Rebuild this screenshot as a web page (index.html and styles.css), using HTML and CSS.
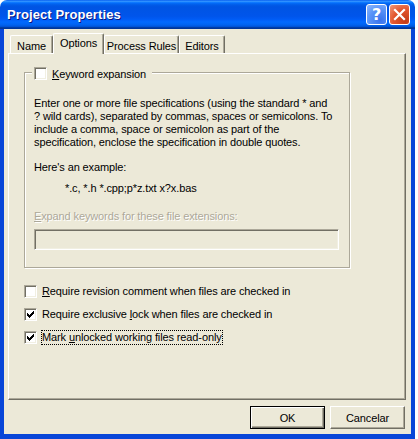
FILE: index.html
```html
<!DOCTYPE html>
<html>
<head>
<meta charset="utf-8">
<link rel="stylesheet" href="styles.css">
</head>
<body>
<div class="window">
  <div class="titlebar">
    <span class="title">Project Properties</span>
    <div class="controls">
      <span class="tbtn help">?</span>
      <span class="tbtn close"><svg width="13" height="13" viewBox="0 0 13 13"><path d="M2 2 L11 11 M11 2 L2 11" stroke="#fff" stroke-width="2.2" stroke-linecap="square"/></svg></span>
    </div>
  </div>
  <div class="frame">
    <div class="tabs">
      <div class="tab t-name">Name</div>
      <div class="tab active t-options">Options</div>
      <div class="tab t-rules">Process Rules</div>
      <div class="tab t-editors">Editors</div>
    </div>
    <div class="panel">
      <div class="group">
        <div class="caption"><span class="cb"></span><span class="cap-text"><u>K</u>eyword expansion</span></div>
        <p class="desc">Enter one or more file specifications (using the standard * and<br>? wild cards), separated by commas, spaces or semicolons. To<br>include a comma, space or semicolon as part of the<br>specification, enclose the specification in double quotes.</p>
        <p class="here">Here's an example:</p>
        <p class="example">*.c, *.h *.cpp;p*z.txt x?x.bas</p>
        <p class="disabled"><u>E</u>xpand keywords for these file extensions:</p>
        <div class="textbox"></div>
      </div>
      <div class="options">
        <div class="opt"><span class="cb"></span><span class="lbl"><u>R</u>equire revision comment when files are checked in</span></div>
        <div class="opt"><span class="cb checked"><svg width="7" height="7" viewBox="0 0 7 7"><path d="M0 2h1v1h1v1h1v-1h1v-1h1v-1h1v-1h1v3h-1v1h-1v1h-1v1h-1v1h-1v-1h-1v-1h-1z" fill="#000"/></svg></span><span class="lbl">Require exclusive <u>l</u>ock when files are checked in</span></div>
        <div class="opt"><span class="cb checked"><svg width="7" height="7" viewBox="0 0 7 7"><path d="M0 2h1v1h1v1h1v-1h1v-1h1v-1h1v-1h1v3h-1v1h-1v1h-1v1h-1v1h-1v-1h-1v-1h-1z" fill="#000"/></svg></span><span class="lbl focus">Mark <u>u</u>nlocked working files read-only</span></div>
      </div>
    </div>
    <div class="buttons">
      <button class="btn default">OK</button>
      <button class="btn">Cancelar</button>
    </div>
  </div>
</div>
</body>
</html>
```
FILE: styles.css
```css
html, body {
  margin: 0;
  padding: 0;
  background: #ffffff;
}
body {
  font-family: "Liberation Sans", Arial, sans-serif;
  font-size: 11px;
  letter-spacing: -0.12px;
  color: #000;
}
.window {
  width: 415px;
  height: 439px;
  display: flex;
  flex-direction: column;
}
.titlebar {
  height: 29px;
  flex: none;
  box-sizing: border-box;
  border-radius: 7px 7px 0 0;
  background: linear-gradient(to bottom, #0058ee 0%, #3593ff 4%, #288eff 6%, #127dff 8%, #036ffc 10%, #0262ee 14%, #0057e5 20%, #0054e3 24%, #0055eb 56%, #005bf5 66%, #026afe 76%, #0062ef 86%, #0052d6 92%, #0040ab 94%, #003092 100%);
  display: flex;
  align-items: center;
  justify-content: space-between;
  padding: 0 5px 1px 7px;
}
.title {
  color: #fff;
  font-weight: bold;
  font-size: 13px;
  letter-spacing: 0.1px;
  text-shadow: 1px 1px 0 #0a1883;
}
.controls {
  display: flex;
  gap: 2px;
}
.tbtn {
  width: 21px;
  height: 21px;
  box-sizing: border-box;
  border: 1px solid #fff;
  border-radius: 3px;
  display: flex;
  align-items: center;
  justify-content: center;
  color: #fff;
  font-weight: bold;
  font-size: 16px;
  font-family: "DejaVu Sans", sans-serif;
}
.help {
  background: radial-gradient(circle at 70% 80%, #3a72ec 0%, #5a94f8 55%, #90b8fc 100%);
}
.close {
  background: radial-gradient(circle at 80% 85%, #c33b16 0%, #e3572f 55%, #f19a7c 100%);
}
.frame {
  flex: 1;
  box-sizing: border-box;
  background: #ece9d8;
  border-left: 4px solid #0846d8;
  border-right: 4px solid #0846d8;
  border-bottom: 5px solid #0846d8;
  display: flex;
  flex-direction: column;
  padding: 4px 0 0 0;
}
.tabs {
  display: flex;
  align-items: flex-end;
  height: 21px;
  margin: 0 0 -1px 4px;
  padding-left: 2px;
  position: relative;
  z-index: 1;
}
.tab {
  box-sizing: border-box;
  height: 18px;
  margin-bottom: 1px;
  border-left: 1px solid #fff;
  border-top: 1px solid #fff;
  border-right: 1px solid #716f64;
  box-shadow: inset -1px 0 0 #aca899;
  border-radius: 2px 2px 0 0;
  background: #ece9d8;
  display: flex;
  align-items: center;
  justify-content: center;
  padding-top: 2px;
}
.t-name { width: 43px; }
.t-options { width: 51px; }
.t-rules { width: 75px; }
.t-editors { width: 46px; }
.tab.active {
  height: 21px;
  margin-bottom: 0;
  padding-top: 0;
  padding-bottom: 3px;
}
.panel {
  box-sizing: border-box;
  height: 347px;
  margin: 0 5px 0 4px;
  border-left: 1px solid #fff;
  border-top: 1px solid #fff;
  border-right: 1px solid #716f64;
  border-bottom: 1px solid #716f64;
  box-shadow: inset -1px -1px 0 #aca899;
  display: flex;
  flex-direction: column;
}
.group {
  box-sizing: border-box;
  width: 326px;
  height: 196px;
  margin: 18px 0 0 15px;
  border: 1px solid #aca899;
  box-shadow: 1px 1px 0 #fff, inset 1px 1px 0 #fff;
  display: flex;
  flex-direction: column;
  align-items: flex-start;
  padding: 0 0 0 9px;
}
.caption {
  margin: -6px 0 0 -2px;
  padding: 0 6px 0 2px;
  background: #ece9d8;
  display: flex;
  align-items: center;
  gap: 5px;
  height: 13px;
}
.cb {
  width: 13px;
  height: 13px;
  flex: none;
  box-sizing: border-box;
  background: #fff;
  border-top: 1px solid #aca899;
  border-left: 1px solid #aca899;
  border-right: 1px solid #fff;
  border-bottom: 1px solid #fff;
  box-shadow: inset 1px 1px 0 #716f64, inset -1px -1px 0 #f1efe2;
  display: flex;
  align-items: center;
  justify-content: center;
}
.cb svg {
  display: block;
}
p {
  margin: 0;
  line-height: 13px;
  white-space: nowrap;
}
.desc {
  margin-top: 17px;
}
.here {
  margin-top: 12px;
}
.example {
  margin-top: 8px;
  margin-left: 31px;
}
.disabled {
  margin-top: 15px;
  color: #aca899;
  text-shadow: 1px 1px 0 #fff;
}
.textbox {
  margin-top: 6px;
  width: 305px;
  height: 21px;
  box-sizing: border-box;
  border-top: 1px solid #aca899;
  border-left: 1px solid #aca899;
  border-right: 1px solid #fff;
  border-bottom: 1px solid #fff;
  box-shadow: inset 1px 1px 0 #716f64, inset -1px -1px 0 #f1efe2;
  background: #ece9d8;
}
.options {
  margin: 16px 0 0 15px;
  display: flex;
  flex-direction: column;
  gap: 8px;
}
.opt {
  height: 15px;
  display: flex;
  align-items: center;
  gap: 4px;
}
.lbl {
  border: 1px dotted transparent;
  line-height: 13px;
  white-space: nowrap;
}
.lbl.focus {
  border-color: #000;
}
.buttons {
  display: flex;
  justify-content: flex-end;
  gap: 5px;
  margin: 6px 6px 0 0;
}
.btn {
  width: 75px;
  height: 23px;
  box-sizing: border-box;
  font-family: "Liberation Sans", Arial, sans-serif;
  font-size: 11px;
  letter-spacing: -0.12px;
  color: #000;
  background: #ece9d8;
  border-top: 1px solid #fff;
  border-left: 1px solid #fff;
  border-right: 1px solid #716f64;
  border-bottom: 1px solid #716f64;
  box-shadow: inset -1px -1px 0 #aca899;
  padding: 0;
  margin: 0;
}
.btn.default {
  border: 1px solid #000;
  box-shadow: inset 1px 1px 0 #fff, inset -1px -1px 0 #716f64, inset -2px -2px 0 #aca899;
}
```
